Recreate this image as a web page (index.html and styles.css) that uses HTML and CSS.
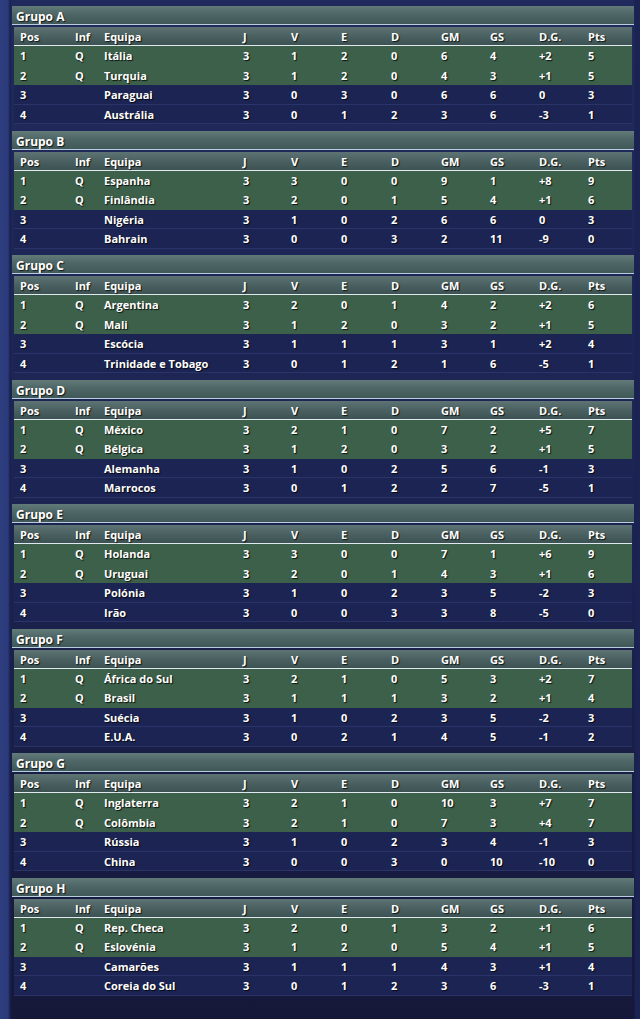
FILE: index.html
```html
<!DOCTYPE html>
<html lang="pt">
<head>
<meta charset="utf-8">
<title>Grupos</title>
<link rel="stylesheet" href="styles.css">
</head>
<body>
<main class="page">

<section class="group">
  <div class="title">Grupo A</div>
  <div class="table">
    <div class="row head"><span>Pos</span><span>Inf</span><span>Equipa</span><span>J</span><span>V</span><span>E</span><span>D</span><span>GM</span><span>GS</span><span>D.G.</span><span>Pts</span></div>
    <div class="row q"><span>1</span><span>Q</span><span>Itália</span><span>3</span><span>1</span><span>2</span><span>0</span><span>6</span><span>4</span><span>+2</span><span>5</span></div>
    <div class="row q"><span>2</span><span>Q</span><span>Turquia</span><span>3</span><span>1</span><span>2</span><span>0</span><span>4</span><span>3</span><span>+1</span><span>5</span></div>
    <div class="row"><span>3</span><span></span><span>Paraguai</span><span>3</span><span>0</span><span>3</span><span>0</span><span>6</span><span>6</span><span>0</span><span>3</span></div>
    <div class="row"><span>4</span><span></span><span>Austrália</span><span>3</span><span>0</span><span>1</span><span>2</span><span>3</span><span>6</span><span>-3</span><span>1</span></div>
  </div>
</section>

<section class="group">
  <div class="title">Grupo B</div>
  <div class="table">
    <div class="row head"><span>Pos</span><span>Inf</span><span>Equipa</span><span>J</span><span>V</span><span>E</span><span>D</span><span>GM</span><span>GS</span><span>D.G.</span><span>Pts</span></div>
    <div class="row q"><span>1</span><span>Q</span><span>Espanha</span><span>3</span><span>3</span><span>0</span><span>0</span><span>9</span><span>1</span><span>+8</span><span>9</span></div>
    <div class="row q"><span>2</span><span>Q</span><span>Finlândia</span><span>3</span><span>2</span><span>0</span><span>1</span><span>5</span><span>4</span><span>+1</span><span>6</span></div>
    <div class="row"><span>3</span><span></span><span>Nigéria</span><span>3</span><span>1</span><span>0</span><span>2</span><span>6</span><span>6</span><span>0</span><span>3</span></div>
    <div class="row"><span>4</span><span></span><span>Bahrain</span><span>3</span><span>0</span><span>0</span><span>3</span><span>2</span><span>11</span><span>-9</span><span>0</span></div>
  </div>
</section>

<section class="group">
  <div class="title">Grupo C</div>
  <div class="table">
    <div class="row head"><span>Pos</span><span>Inf</span><span>Equipa</span><span>J</span><span>V</span><span>E</span><span>D</span><span>GM</span><span>GS</span><span>D.G.</span><span>Pts</span></div>
    <div class="row q"><span>1</span><span>Q</span><span>Argentina</span><span>3</span><span>2</span><span>0</span><span>1</span><span>4</span><span>2</span><span>+2</span><span>6</span></div>
    <div class="row q"><span>2</span><span>Q</span><span>Mali</span><span>3</span><span>1</span><span>2</span><span>0</span><span>3</span><span>2</span><span>+1</span><span>5</span></div>
    <div class="row"><span>3</span><span></span><span>Escócia</span><span>3</span><span>1</span><span>1</span><span>1</span><span>3</span><span>1</span><span>+2</span><span>4</span></div>
    <div class="row"><span>4</span><span></span><span>Trinidade e Tobago</span><span>3</span><span>0</span><span>1</span><span>2</span><span>1</span><span>6</span><span>-5</span><span>1</span></div>
  </div>
</section>

<section class="group">
  <div class="title">Grupo D</div>
  <div class="table">
    <div class="row head"><span>Pos</span><span>Inf</span><span>Equipa</span><span>J</span><span>V</span><span>E</span><span>D</span><span>GM</span><span>GS</span><span>D.G.</span><span>Pts</span></div>
    <div class="row q"><span>1</span><span>Q</span><span>México</span><span>3</span><span>2</span><span>1</span><span>0</span><span>7</span><span>2</span><span>+5</span><span>7</span></div>
    <div class="row q"><span>2</span><span>Q</span><span>Bélgica</span><span>3</span><span>1</span><span>2</span><span>0</span><span>3</span><span>2</span><span>+1</span><span>5</span></div>
    <div class="row"><span>3</span><span></span><span>Alemanha</span><span>3</span><span>1</span><span>0</span><span>2</span><span>5</span><span>6</span><span>-1</span><span>3</span></div>
    <div class="row"><span>4</span><span></span><span>Marrocos</span><span>3</span><span>0</span><span>1</span><span>2</span><span>2</span><span>7</span><span>-5</span><span>1</span></div>
  </div>
</section>

<section class="group">
  <div class="title">Grupo E</div>
  <div class="table">
    <div class="row head"><span>Pos</span><span>Inf</span><span>Equipa</span><span>J</span><span>V</span><span>E</span><span>D</span><span>GM</span><span>GS</span><span>D.G.</span><span>Pts</span></div>
    <div class="row q"><span>1</span><span>Q</span><span>Holanda</span><span>3</span><span>3</span><span>0</span><span>0</span><span>7</span><span>1</span><span>+6</span><span>9</span></div>
    <div class="row q"><span>2</span><span>Q</span><span>Uruguai</span><span>3</span><span>2</span><span>0</span><span>1</span><span>4</span><span>3</span><span>+1</span><span>6</span></div>
    <div class="row"><span>3</span><span></span><span>Polónia</span><span>3</span><span>1</span><span>0</span><span>2</span><span>3</span><span>5</span><span>-2</span><span>3</span></div>
    <div class="row"><span>4</span><span></span><span>Irão</span><span>3</span><span>0</span><span>0</span><span>3</span><span>3</span><span>8</span><span>-5</span><span>0</span></div>
  </div>
</section>

<section class="group">
  <div class="title">Grupo F</div>
  <div class="table">
    <div class="row head"><span>Pos</span><span>Inf</span><span>Equipa</span><span>J</span><span>V</span><span>E</span><span>D</span><span>GM</span><span>GS</span><span>D.G.</span><span>Pts</span></div>
    <div class="row q"><span>1</span><span>Q</span><span>África do Sul</span><span>3</span><span>2</span><span>1</span><span>0</span><span>5</span><span>3</span><span>+2</span><span>7</span></div>
    <div class="row q"><span>2</span><span>Q</span><span>Brasil</span><span>3</span><span>1</span><span>1</span><span>1</span><span>3</span><span>2</span><span>+1</span><span>4</span></div>
    <div class="row"><span>3</span><span></span><span>Suécia</span><span>3</span><span>1</span><span>0</span><span>2</span><span>3</span><span>5</span><span>-2</span><span>3</span></div>
    <div class="row"><span>4</span><span></span><span>E.U.A.</span><span>3</span><span>0</span><span>2</span><span>1</span><span>4</span><span>5</span><span>-1</span><span>2</span></div>
  </div>
</section>

<section class="group">
  <div class="title">Grupo G</div>
  <div class="table">
    <div class="row head"><span>Pos</span><span>Inf</span><span>Equipa</span><span>J</span><span>V</span><span>E</span><span>D</span><span>GM</span><span>GS</span><span>D.G.</span><span>Pts</span></div>
    <div class="row q"><span>1</span><span>Q</span><span>Inglaterra</span><span>3</span><span>2</span><span>1</span><span>0</span><span>10</span><span>3</span><span>+7</span><span>7</span></div>
    <div class="row q"><span>2</span><span>Q</span><span>Colômbia</span><span>3</span><span>2</span><span>1</span><span>0</span><span>7</span><span>3</span><span>+4</span><span>7</span></div>
    <div class="row"><span>3</span><span></span><span>Rússia</span><span>3</span><span>1</span><span>0</span><span>2</span><span>3</span><span>4</span><span>-1</span><span>3</span></div>
    <div class="row"><span>4</span><span></span><span>China</span><span>3</span><span>0</span><span>0</span><span>3</span><span>0</span><span>10</span><span>-10</span><span>0</span></div>
  </div>
</section>

<section class="group">
  <div class="title">Grupo H</div>
  <div class="table">
    <div class="row head"><span>Pos</span><span>Inf</span><span>Equipa</span><span>J</span><span>V</span><span>E</span><span>D</span><span>GM</span><span>GS</span><span>D.G.</span><span>Pts</span></div>
    <div class="row q"><span>1</span><span>Q</span><span>Rep. Checa</span><span>3</span><span>2</span><span>0</span><span>1</span><span>3</span><span>2</span><span>+1</span><span>6</span></div>
    <div class="row q"><span>2</span><span>Q</span><span>Eslovénia</span><span>3</span><span>1</span><span>2</span><span>0</span><span>5</span><span>4</span><span>+1</span><span>5</span></div>
    <div class="row"><span>3</span><span></span><span>Camarões</span><span>3</span><span>1</span><span>1</span><span>1</span><span>4</span><span>3</span><span>+1</span><span>4</span></div>
    <div class="row"><span>4</span><span></span><span>Coreia do Sul</span><span>3</span><span>0</span><span>1</span><span>2</span><span>3</span><span>6</span><span>-3</span><span>1</span></div>
  </div>
</section>

</main>
</body>
</html>
```

FILE: styles.css
```css
html, body {
  margin: 0;
  padding: 0;
}

body {
  width: 640px;
  min-height: 1019px;
  font-family: "Open Sans", "DejaVu Sans", sans-serif;
  font-weight: 700;
  font-size: 11px;
  color: #ffffff;
  background:
    linear-gradient(to right, #2d3d7e 0, #2a3a7a 8px, #1a2150 10px, transparent 12px, transparent 634px, #1a2252 635px, #1c2456 640px),
    linear-gradient(to bottom, #202a5c 0, #1c2452 500px, #151838 1019px);
}

.page {
  padding: 6px 6px 0 12px;
  display: flex;
  flex-direction: column;
}

.group {
  height: 124.5px;
  box-sizing: border-box;
}

.title {
  height: 18px;
  line-height: 21px;
  padding-left: 4px;
  font-size: 12px;
  overflow: hidden;
  border-bottom: 1px solid #b8cde0;
  background: linear-gradient(to bottom, #627a78 0%, #4e6666 45%, #415858 100%);
  text-shadow: 1px 1px 1px rgba(0, 0, 0, 0.75);
}

.table {
  margin: 2px 2px 0 2px;
  display: flex;
  flex-direction: column;
}

.row {
  display: grid;
  grid-template-columns: 55px 29px 139px 48px 50px 50px 50px 49px 49px 49px 1fr;
  padding-left: 6px;
  height: 19.5px;
  line-height: 19.5px;
  box-sizing: border-box;
  background: #1c2454;
  border-bottom: 1px solid #2b3468;
  text-shadow: 1px 1px 1px rgba(0, 0, 0, 0.8);
  white-space: nowrap;
}

.row.head {
  height: 19px;
  line-height: 20px;
  background: linear-gradient(to bottom, #5e7373 0%, #4b6060 50%, #3d5252 100%);
  border-bottom: 1px solid #dfe9ee;
}

.row.q {
  background: #3c604a;
  border-bottom: 0;
}
```
